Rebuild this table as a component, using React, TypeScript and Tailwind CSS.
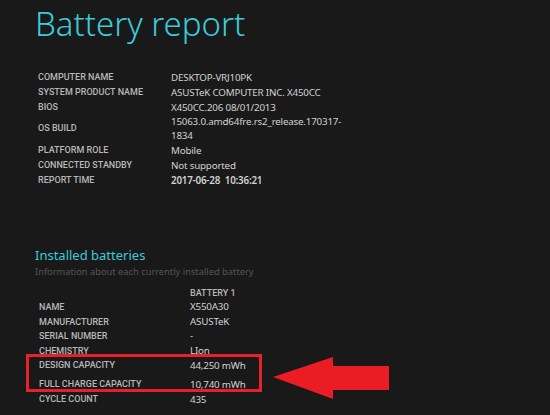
import React from "react";

const INFO: { label: string; value: React.ReactNode; bold?: boolean }[] = [
  { label: "COMPUTER NAME", value: "DESKTOP-VRJ10PK" },
  { label: "SYSTEM PRODUCT NAME", value: "ASUSTeK COMPUTER INC. X450CC" },
  { label: "BIOS", value: "X450CC.206 08/01/2013" },
  { label: "OS BUILD", value: <>15063.0.amd64fre.rs2_release.170317-<br />1834</> },
  { label: "PLATFORM ROLE", value: "Mobile" },
  { label: "CONNECTED STANDBY", value: "Not supported" },
  { label: "REPORT TIME", value: "2017-06-28\u00a0\u00a010:36:21", bold: true },
];

const BATTERY: { label: string; value: string; h: string }[] = [
  { label: "NAME", value: "X550A30", h: "h-[14.5px]" },
  { label: "MANUFACTURER", value: "ASUSTeK", h: "h-[14.5px]" },
  { label: "SERIAL NUMBER", value: "-", h: "h-[14.5px]" },
  { label: "CHEMISTRY", value: "LIon", h: "h-[14.5px]" },
  { label: "DESIGN CAPACITY", value: "44,250 mWh", h: "h-[15px] mb-[4px]" },
  { label: "FULL CHARGE CAPACITY", value: "10,740 mWh", h: "h-[15px]" },
  { label: "CYCLE COUNT", value: "435", h: "h-[15px]" },
];

const label = "font-['Roboto',sans-serif] text-[9px] font-medium text-[#b8b8b8]";
const value = "text-[9.8px] tracking-[-0.2px] text-[#d2d2d2]";

export default function App() {
  return (
    <div className="relative w-[550px] h-[415px] overflow-hidden bg-[#191919] font-['Noto_Sans',sans-serif]">
      <h1 className="pl-[35px] pt-[2px] text-[33px] leading-[44px] font-light text-[#3ccbd8]">
        Battery report
      </h1>

      <div className="mt-[24px] ml-[38px] flex flex-col">
        {INFO.map((r) => (
          <div key={r.label} className="flex items-center min-h-[15px]">
            <div className={"w-[133px] " + label}>{r.label}</div>
            <div className={value + " leading-[14px] " + (r.bold ? "font-semibold" : "")}>{r.value}</div>
          </div>
        ))}
      </div>

      <div className="mt-[59px] ml-[35px]">
        <div className="text-[13px] leading-[17px] text-[#3ccbd8]">Installed batteries</div>
        <div className="text-[9.3px] leading-[15px] text-[#555555]">Information about each currently installed battery</div>
      </div>

      <div className="mt-[7px] ml-[39px] flex flex-col">
        <div className="flex items-center h-[14.5px]">
          <div className="w-[151px]" />
          <div className={label}>BATTERY 1</div>
        </div>
        {BATTERY.map((r) => (
          <div key={r.label} className={"flex items-center " + r.h}>
            <div className={"w-[151px] " + label}>{r.label}</div>
            <div className={value}>{r.value}</div>
          </div>
        ))}
      </div>

      {/* annotation: highlight box + arrow */}
      <div className="absolute left-[26px] top-[354px] w-[236px] h-[38px] border-[3px] border-[#e8202a]" />
      <svg className="absolute left-[270px] top-[354px]" width="124" height="48" viewBox="0 0 124 48">
        <path d="M3 23 L63 3 L63 12 L119 12 L119 36 L63 36 L63 45 Z" fill="#ec1c24" />
      </svg>
    </div>
  );
}
